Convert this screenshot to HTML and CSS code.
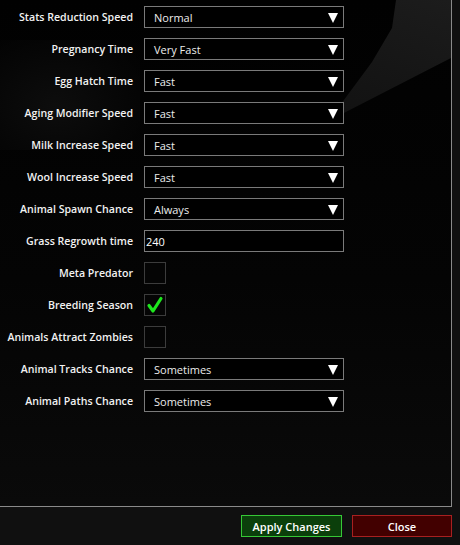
FILE: index.html
```html
<!DOCTYPE html>
<html>
<head>
<meta charset="utf-8">
<link rel="stylesheet" href="styles.css">
</head>
<body>
<div class="panel">
  <div class="bg-shape"></div>
  <div class="bg-tree"></div>
  <div class="rows">
    <div class="row"><span class="label">Stats Reduction Speed</span><div class="select"><span>Normal</span><i class="arrow"></i></div></div>
    <div class="row"><span class="label">Pregnancy Time</span><div class="select"><span>Very Fast</span><i class="arrow"></i></div></div>
    <div class="row"><span class="label">Egg Hatch Time</span><div class="select"><span>Fast</span><i class="arrow"></i></div></div>
    <div class="row"><span class="label">Aging Modifier Speed</span><div class="select"><span>Fast</span><i class="arrow"></i></div></div>
    <div class="row"><span class="label">Milk Increase Speed</span><div class="select"><span>Fast</span><i class="arrow"></i></div></div>
    <div class="row"><span class="label">Wool Increase Speed</span><div class="select"><span>Fast</span><i class="arrow"></i></div></div>
    <div class="row"><span class="label">Animal Spawn Chance</span><div class="select"><span>Always</span><i class="arrow"></i></div></div>
    <div class="row"><span class="label">Grass Regrowth time</span><div class="input">240</div></div>
    <div class="row"><span class="label">Meta Predator</span><div class="check"></div></div>
    <div class="row"><span class="label">Breeding Season</span><div class="check"><svg width="18" height="18" viewBox="0 0 18 18"><path d="M3 9.5 L7 15 L15 2.5" fill="none" stroke="#1ee61e" stroke-width="3.2" stroke-linecap="round" stroke-linejoin="round"/></svg></div></div>
    <div class="row"><span class="label">Animals Attract Zombies</span><div class="check"></div></div>
    <div class="row"><span class="label">Animal Tracks Chance</span><div class="select"><span>Sometimes</span><i class="arrow"></i></div></div>
    <div class="row"><span class="label">Animal Paths Chance</span><div class="select"><span>Sometimes</span><i class="arrow"></i></div></div>
  </div>
</div>
<div class="buttons">
  <button class="btn apply">Apply Changes</button>
  <button class="btn close">Close</button>
</div>
</body>
</html>
```
FILE: styles.css
```css
html, body {
  margin: 0;
  padding: 0;
}
body {
  width: 460px;
  height: 545px;
  background: #101010;
  font-family: "Open Sans", "Noto Sans", sans-serif;
  color: #fff;
  overflow: hidden;
}
.panel {
  position: relative;
  width: 451px;
  height: 506px;
  border-right: 1px solid #8a8a8a;
  border-bottom: 1px solid #8a8a8a;
  background: linear-gradient(180deg, #010101 0%, #040404 55%, #0a0a0a 100%);
  overflow: hidden;
}
.bg-shape {
  position: absolute;
  left: 0;
  top: 0;
  width: 451px;
  height: 130px;
  background: linear-gradient(200deg, #1c1c1c 0%, #141414 40%, #0b0b0b 100%);
  clip-path: polygon(396px 0, 451px 0, 451px 58px, 338px 116px, 338px 108px, 372px 62px, 392px 28px);
}
.bg-tree {
  position: absolute;
  left: 0;
  top: 40px;
  width: 140px;
  height: 110px;
  background: radial-gradient(ellipse at 40% 60%, #0d0d0d 0%, #060606 60%, transparent 100%);
}
.rows {
  position: relative;
  display: flex;
  flex-direction: column;
  gap: 10px;
  padding-top: 6px;
}
.row {
  display: flex;
  align-items: center;
  height: 22px;
}
.label {
  width: 133px;
  text-align: right;
  font-size: 10.6px;
  font-weight: 600;
  margin-right: 11px;
  white-space: nowrap;
  color: #f2f2f2;
}
.select, .input {
  box-sizing: border-box;
  width: 200px;
  height: 22px;
  border: 1px solid #7a7a7a;
  background: #000;
  display: flex;
  align-items: center;
  font-size: 11px;
  color: #ececec;
}
.select {
  padding-left: 9px;
  padding-right: 5px;
  justify-content: space-between;
}
.input {
  padding-left: 1px;
  color: #fff;
}
.arrow {
  width: 0;
  height: 0;
  border-left: 5px solid transparent;
  border-right: 5px solid transparent;
  border-top: 10px solid #fff;
  margin-top: 2px;
}
.check {
  box-sizing: border-box;
  width: 22px;
  height: 22px;
  border: 1px solid #3c3c3c;
  background: #050505;
  display: flex;
  align-items: center;
  justify-content: center;
}
.buttons {
  display: flex;
  justify-content: flex-end;
  gap: 10px;
  padding: 8px 8px 0 0;
}
.btn {
  box-sizing: border-box;
  height: 22px;
  width: 101px;
  font-family: "Open Sans", "Noto Sans", sans-serif;
  font-size: 11px;
  font-weight: 600;
  color: #fff;
  padding: 0;
}
.apply {
  background: #0b3f0b;
  border: 1px solid #36c836;
}
.close {
  background: #420000;
  border: 1px solid #a82020;
  width: 100px;
}
```
